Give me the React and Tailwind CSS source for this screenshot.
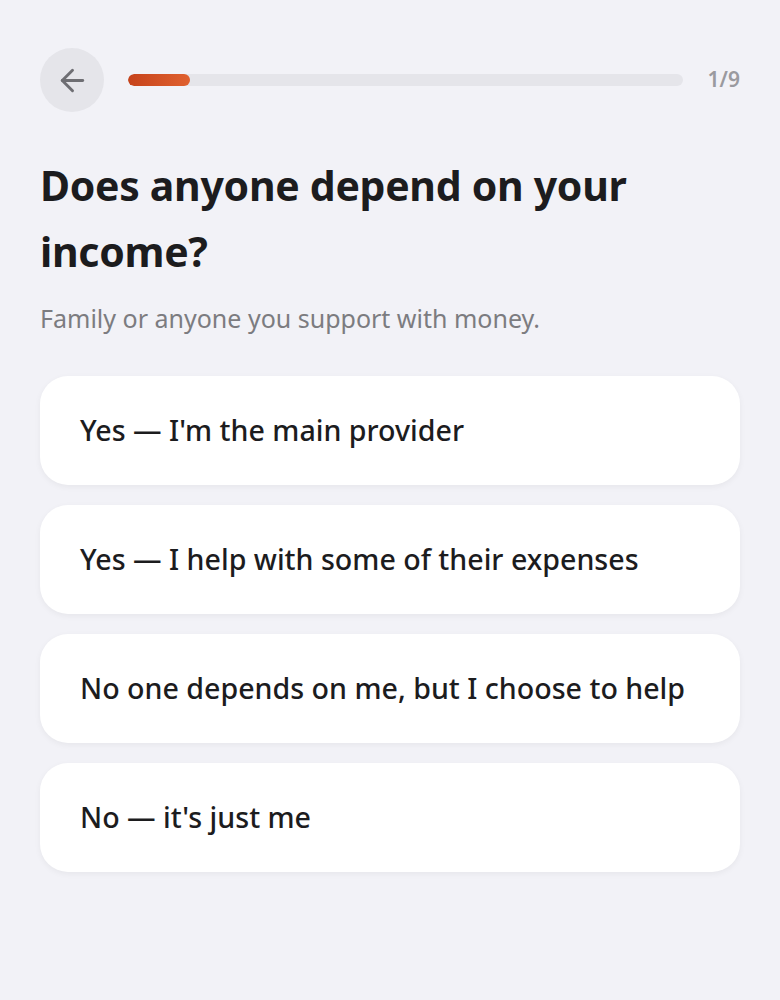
import { ArrowLeft } from 'lucide-react';

const options = [
  "Yes — I'm the main provider",
  'Yes — I help with some of their expenses',
  'No one depends on me, but I choose to help',
  "No — it's just me",
];

export default function App() {
  const step = 1;
  const total = 9;

  return (
    <div
      className="min-h-screen bg-[#f2f2f7] px-10 pt-12 pb-10"
      style={{ fontFamily: '"Noto Sans", "Open Sans", sans-serif' }}
    >
      <div className="flex items-center gap-6">
        <button className="w-16 h-16 rounded-full bg-[#e5e5ea] flex items-center justify-center text-[#6e6e73] shrink-0">
          <ArrowLeft size={35} strokeWidth={2} />
        </button>
        <div className="flex-1 h-3 rounded-full bg-[#e5e5ea] overflow-hidden">
          <div
            className="h-full rounded-full bg-gradient-to-r from-[#c6431b] to-[#e0612f]"
            style={{ width: `${(step / total) * 100}%` }}
          />
        </div>
        <span className="text-[21px] font-semibold text-[#9a9a9f] w-[33px] text-right">
          {step}/{total}
        </span>
      </div>

      <h1 className="mt-[40px] text-[41px] leading-[66px] font-bold text-[#1c1c1e] tracking-[-0.3px]">
        Does anyone depend on your income?
      </h1>
      <p className="mt-[18px] text-[25px] leading-[32px] text-[#7c7c80]">
        Family or anyone you support with money.
      </p>

      <div className="mt-[42px] flex flex-col gap-5">
        {options.map((o) => (
          <button
            key={o}
            className="h-[109px] w-full rounded-[28px] bg-white px-10 text-left text-[28.6px] font-medium text-[#1c1c1e] shadow-[0_2px_6px_rgba(0,0,0,0.05)]"
          >
            {o}
          </button>
        ))}
      </div>
    </div>
  );
}
